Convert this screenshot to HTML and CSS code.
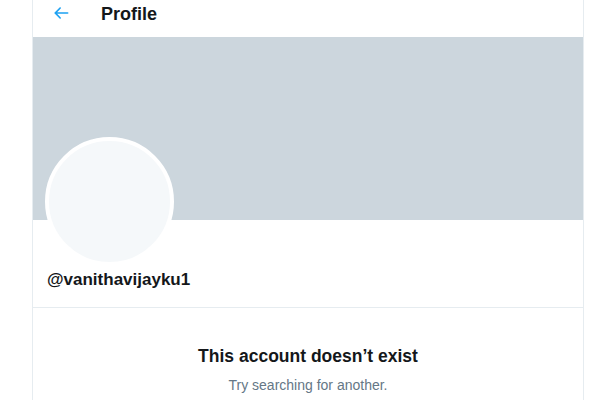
FILE: index.html
```html
<!DOCTYPE html>
<html lang="en">
<head>
    <meta charset="UTF-8">
    <meta name="viewport" content="width=device-width, initial-scale=1.0">
    <title>Profile</title>
    <link rel="stylesheet" href="styles.css">
</head>
<body>
    <div class="column">
        <div class="top-bar">
            <button class="back-btn" aria-label="Back">
                <svg viewBox="0 0 24 24" width="20" height="20">
                    <path d="M20 11H7.414l4.293-4.293c.39-.39.39-1.023 0-1.414s-1.023-.39-1.414 0l-6 6c-.39.39-.39 1.023 0 1.414l6 6c.195.195.45.293.707.293s.512-.098.707-.293c.39-.39.39-1.023 0-1.414L7.414 13H20c.553 0 1-.447 1-1s-.447-1-1-1z"/>
                </svg>
            </button>
            <h2 class="title">Profile</h2>
        </div>

        <div class="banner"></div>

        <div class="profile-info">
            <div class="avatar"></div>
            <div class="username">@vanithavijayku1</div>
        </div>

        <div class="empty-state">
            <h3>This account doesn’t exist</h3>
            <p>Try searching for another.</p>
        </div>
    </div>
</body>
</html>
```

FILE: styles.css
```css
:root {
    --blue: #1da1f2;
    --border: #e6ecf0;
    --banner: #ccd6dd;
    --text-dark: #14171a;
    --text-muted: #657786;
}

* {
    margin: 0;
    padding: 0;
    box-sizing: border-box;
}

body {
    background: #fff;
    font-family: 'Liberation Sans', Arial, sans-serif;
    color: var(--text-dark);
}

.column {
    margin-left: 32px;
    width: 552px;
    min-height: 400px;
    border-left: 1px solid var(--border);
    border-right: 1px solid var(--border);
}

.top-bar {
    height: 37px;
    display: flex;
    align-items: flex-start;
    padding: 3px 0 0 18px;
    gap: 30px;
}

.back-btn {
    background: none;
    border: none;
    width: 20px;
    height: 20px;
    fill: var(--blue);
    cursor: pointer;
}

.title {
    font-size: 18px;
    font-weight: 700;
    line-height: 22px;
}

.banner {
    height: 183px;
    background: var(--banner);
}

.profile-info {
    display: flex;
    flex-direction: column;
    align-items: flex-start;
    padding: 0 12px;
    height: 88px;
    border-bottom: 1px solid var(--border);
}

.avatar {
    width: 129px;
    height: 129px;
    margin-top: -83px;
    border-radius: 50%;
    border: 4px solid #fff;
    background: #f5f8fa;
}

.username {
    margin: 3px 0 0 2px;
    font-size: 17px;
    font-weight: 700;
    line-height: 22px;
}

.empty-state {
    text-align: center;
    padding-top: 37px;
}

.empty-state h3 {
    font-size: 17.5px;
    font-weight: 700;
    line-height: 22px;
}

.empty-state p {
    margin-top: 10px;
    font-size: 14px;
    color: var(--text-muted);
}
```
